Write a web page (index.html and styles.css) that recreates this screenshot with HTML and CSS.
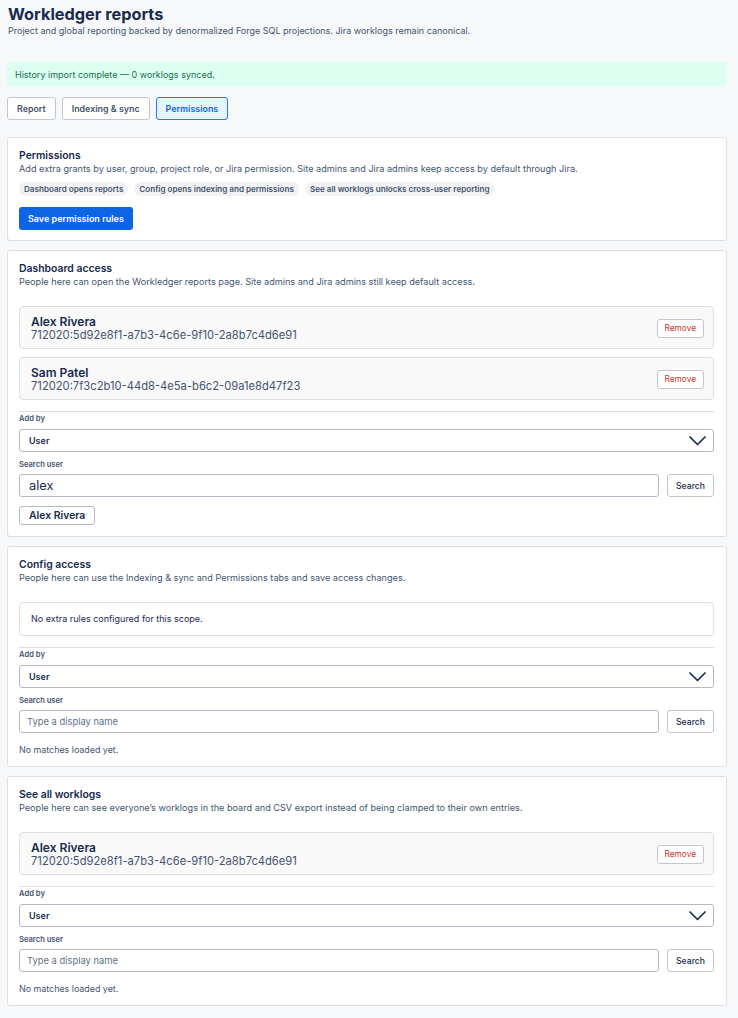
FILE: index.html
```html
<!DOCTYPE html>
<html lang="en">
<head>
<meta charset="utf-8">
<title>Workledger reports</title>
<link rel="stylesheet" href="styles.css">
</head>
<body>
<div class="page">
  <h1 class="title">Workledger reports</h1>
  <p class="subtitle">Project and global reporting backed by denormalized Forge SQL projections. Jira worklogs remain canonical.</p>

  <div class="banner">History import complete — 0 worklogs synced.</div>

  <div class="tabs">
    <button class="tab">Report</button>
    <button class="tab">Indexing &amp; sync</button>
    <button class="tab tab-active">Permissions</button>
  </div>

  <section class="card">
    <h2 class="card-title">Permissions</h2>
    <p class="card-desc">Add extra grants by user, group, project role, or Jira permission. Site admins and Jira admins keep access by default through Jira.</p>
    <div class="chips">
      <span class="chip">Dashboard opens reports</span>
      <span class="chip">Config opens indexing and permissions</span>
      <span class="chip">See all worklogs unlocks cross-user reporting</span>
    </div>
    <button class="btn-primary">Save permission rules</button>
  </section>

  <section class="card">
    <h2 class="card-title">Dashboard access</h2>
    <p class="card-desc">People here can open the Workledger reports page. Site admins and Jira admins still keep default access.</p>
    <div class="grants">
      <div class="grant">
        <div class="grant-info">
          <div class="grant-name">Alex Rivera</div>
          <div class="grant-id">712020:5d92e8f1-a7b3-4c6e-9f10-2a8b7c4d6e91</div>
        </div>
        <button class="btn-remove">Remove</button>
      </div>
      <div class="grant">
        <div class="grant-info">
          <div class="grant-name">Sam Patel</div>
          <div class="grant-id">712020:7f3c2b10-44d8-4e5a-b6c2-09a1e8d47f23</div>
        </div>
        <button class="btn-remove">Remove</button>
      </div>
    </div>
    <div class="add-form">
      <div class="field-label">Add by</div>
      <div class="select"><span class="select-value">User</span><svg class="chevron" width="17" height="10" viewBox="0 0 17 10"><polyline points="1,1 8.5,8.5 16,1" fill="none" stroke="#172b4d" stroke-width="1.7" stroke-linecap="round" stroke-linejoin="round"/></svg></div>
      <div class="field-label label-gap">Search user</div>
      <div class="search-row">
        <input class="input input-filled" type="text" value="alex">
        <button class="btn-secondary">Search</button>
      </div>
      <div class="results"><button class="btn-result">Alex Rivera</button></div>
    </div>
  </section>

  <section class="card">
    <h2 class="card-title">Config access</h2>
    <p class="card-desc">People here can use the Indexing &amp; sync and Permissions tabs and save access changes.</p>
    <div class="grants">
      <div class="empty">No extra rules configured for this scope.</div>
    </div>
    <div class="add-form">
      <div class="field-label">Add by</div>
      <div class="select"><span class="select-value">User</span><svg class="chevron" width="17" height="10" viewBox="0 0 17 10"><polyline points="1,1 8.5,8.5 16,1" fill="none" stroke="#172b4d" stroke-width="1.7" stroke-linecap="round" stroke-linejoin="round"/></svg></div>
      <div class="field-label label-gap">Search user</div>
      <div class="search-row">
        <input class="input" type="text" placeholder="Type a display name">
        <button class="btn-secondary">Search</button>
      </div>
      <p class="no-matches">No matches loaded yet.</p>
    </div>
  </section>

  <section class="card">
    <h2 class="card-title">See all worklogs</h2>
    <p class="card-desc">People here can see everyone’s worklogs in the board and CSV export instead of being clamped to their own entries.</p>
    <div class="grants">
      <div class="grant">
        <div class="grant-info">
          <div class="grant-name">Alex Rivera</div>
          <div class="grant-id">712020:5d92e8f1-a7b3-4c6e-9f10-2a8b7c4d6e91</div>
        </div>
        <button class="btn-remove">Remove</button>
      </div>
    </div>
    <div class="add-form">
      <div class="field-label">Add by</div>
      <div class="select"><span class="select-value">User</span><svg class="chevron" width="17" height="10" viewBox="0 0 17 10"><polyline points="1,1 8.5,8.5 16,1" fill="none" stroke="#172b4d" stroke-width="1.7" stroke-linecap="round" stroke-linejoin="round"/></svg></div>
      <div class="field-label label-gap">Search user</div>
      <div class="search-row">
        <input class="input" type="text" placeholder="Type a display name">
        <button class="btn-secondary">Search</button>
      </div>
      <p class="no-matches">No matches loaded yet.</p>
    </div>
  </section>
</div>
</body>
</html>
```

FILE: styles.css
```css
* { box-sizing: border-box; }

html, body {
  margin: 0;
  padding: 0;
  background: #f7f8f9;
}

body {
  font-family: Inter, "Noto Sans", "Liberation Sans", sans-serif;
  color: #172b4d;
}

.page {
  width: 720px;
  margin-left: 7px;
  padding-bottom: 12px;
}

.title {
  margin: 0;
  padding-top: 4px;
  padding-left: 1px;
  font-size: 16.3px;
  line-height: 20px;
  font-weight: 700;
  color: #172b4d;
}

.subtitle {
  margin: 1px 0 0 1px;
  font-size: 9px;
  line-height: 12px;
  color: #44546f;
}

.banner {
  margin-top: 25px;
  height: 25px;
  line-height: 25px;
  padding: 0 8px;
  background: #dcfff1;
  color: #216e4e;
  font-size: 9px;
  border-radius: 3px;
}

.tabs {
  display: flex;
  gap: 6px;
  margin-top: 10px;
}

.tab {
  height: 23px;
  padding: 0 9px;
  font-family: inherit;
  font-size: 8.9px;
  font-weight: 600;
  color: #44546f;
  background: #ffffff;
  border: 1px solid #c1c7d0;
  border-radius: 3px;
}

.tab-active {
  background: #e9f2ff;
  border-color: #1d7afc;
  color: #0c66e4;
}

.card {
  margin-top: 9px;
  background: #ffffff;
  border: 1px solid #dcdfe4;
  border-radius: 3px;
  padding: 11px 12px 10px 11px;
}

.tabs + .card {
  margin-top: 17px;
}

.card-title {
  margin: 0;
  font-size: 10.4px;
  line-height: 13px;
  font-weight: 600;
  color: #172b4d;
}

.card-desc {
  margin: 1px 0 0;
  font-size: 9.15px;
  line-height: 12px;
  color: #44546f;
}

.chips {
  display: flex;
  gap: 6px;
  margin-top: 7px;
}

.chip {
  height: 14px;
  line-height: 14px;
  padding: 0 5px;
  border-radius: 7px;
  background: #f1f2f4;
  color: #44546f;
  font-size: 8.1px;
  font-weight: 600;
}

.btn-primary {
  display: block;
  margin-top: 11px;
  height: 23px;
  padding: 0 9px;
  font-family: inherit;
  font-size: 9px;
  font-weight: 600;
  color: #ffffff;
  background: #0c66e4;
  border: none;
  border-radius: 3px;
}

.grants {
  margin-top: 18px;
  display: flex;
  flex-direction: column;
  gap: 8px;
}

.grant {
  display: flex;
  align-items: center;
  justify-content: space-between;
  padding: 7px 9px 6px 11px;
  background: #f9f9fa;
  border: 1px solid #dcdfe4;
  border-radius: 4px;
}

.grant-name {
  font-size: 12px;
  line-height: 15px;
  font-weight: 600;
  color: #172b4d;
}

.grant-id {
  font-size: 11.2px;
  line-height: 13px;
  color: #44546f;
}

.btn-remove {
  height: 19px;
  padding: 0 7px;
  font-family: inherit;
  font-size: 8.3px;
  color: #c9372c;
  background: #ffffff;
  border: 1px solid #c1c7d0;
  border-radius: 3px;
}

.empty {
  height: 34px;
  line-height: 32px;
  padding: 0 11px;
  border: 1px solid #dcdfe4;
  border-radius: 4px;
  font-size: 9px;
  color: #172b4d;
}

.add-form {
  margin-top: 11px;
  border-top: 1px solid #dcdfe4;
  padding-top: 1px;
}

.field-label {
  font-size: 7.6px;
  line-height: 12px;
  font-weight: 600;
  color: #44546f;
}

.label-gap {
  margin-top: 7px;
}

.select {
  margin-top: 4px;
  height: 23px;
  display: flex;
  align-items: center;
  justify-content: space-between;
  padding: 0 7px 0 9px;
  border: 1px solid #b3b9c4;
  border-radius: 3px;
  background: #ffffff;
}

.select-value {
  font-size: 9px;
  font-weight: 600;
  color: #172b4d;
}

.chevron {
  display: block;
}

.search-row {
  margin-top: 3px;
  display: flex;
  gap: 8px;
}

.input {
  flex: 1;
  height: 23px;
  padding: 0 7px;
  font-family: inherit;
  font-size: 9.4px;
  color: #172b4d;
  border: 1px solid #b3b9c4;
  border-radius: 3px;
  background: #ffffff;
  outline: none;
}

.input::placeholder {
  color: #626f86;
}

.input-filled {
  font-size: 12.8px;
  padding-left: 9px;
}

.btn-secondary {
  width: 47px;
  height: 23px;
  padding: 0;
  font-family: inherit;
  font-size: 8.6px;
  font-weight: 500;
  color: #172b4d;
  background: #ffffff;
  border: 1px solid #c1c7d0;
  border-radius: 3px;
}

.results {
  display: flex;
  margin-top: 9px;
  margin-bottom: 1px;
}

.btn-result {
  height: 19px;
  padding: 0 9px;
  font-family: inherit;
  font-size: 10.4px;
  font-weight: 600;
  color: #172b4d;
  background: #ffffff;
  border: 1px solid #b3b9c4;
  border-radius: 3px;
}

.no-matches {
  margin: 10px 0 0;
  font-size: 8.9px;
  line-height: 13px;
  color: #44546f;
}
```
